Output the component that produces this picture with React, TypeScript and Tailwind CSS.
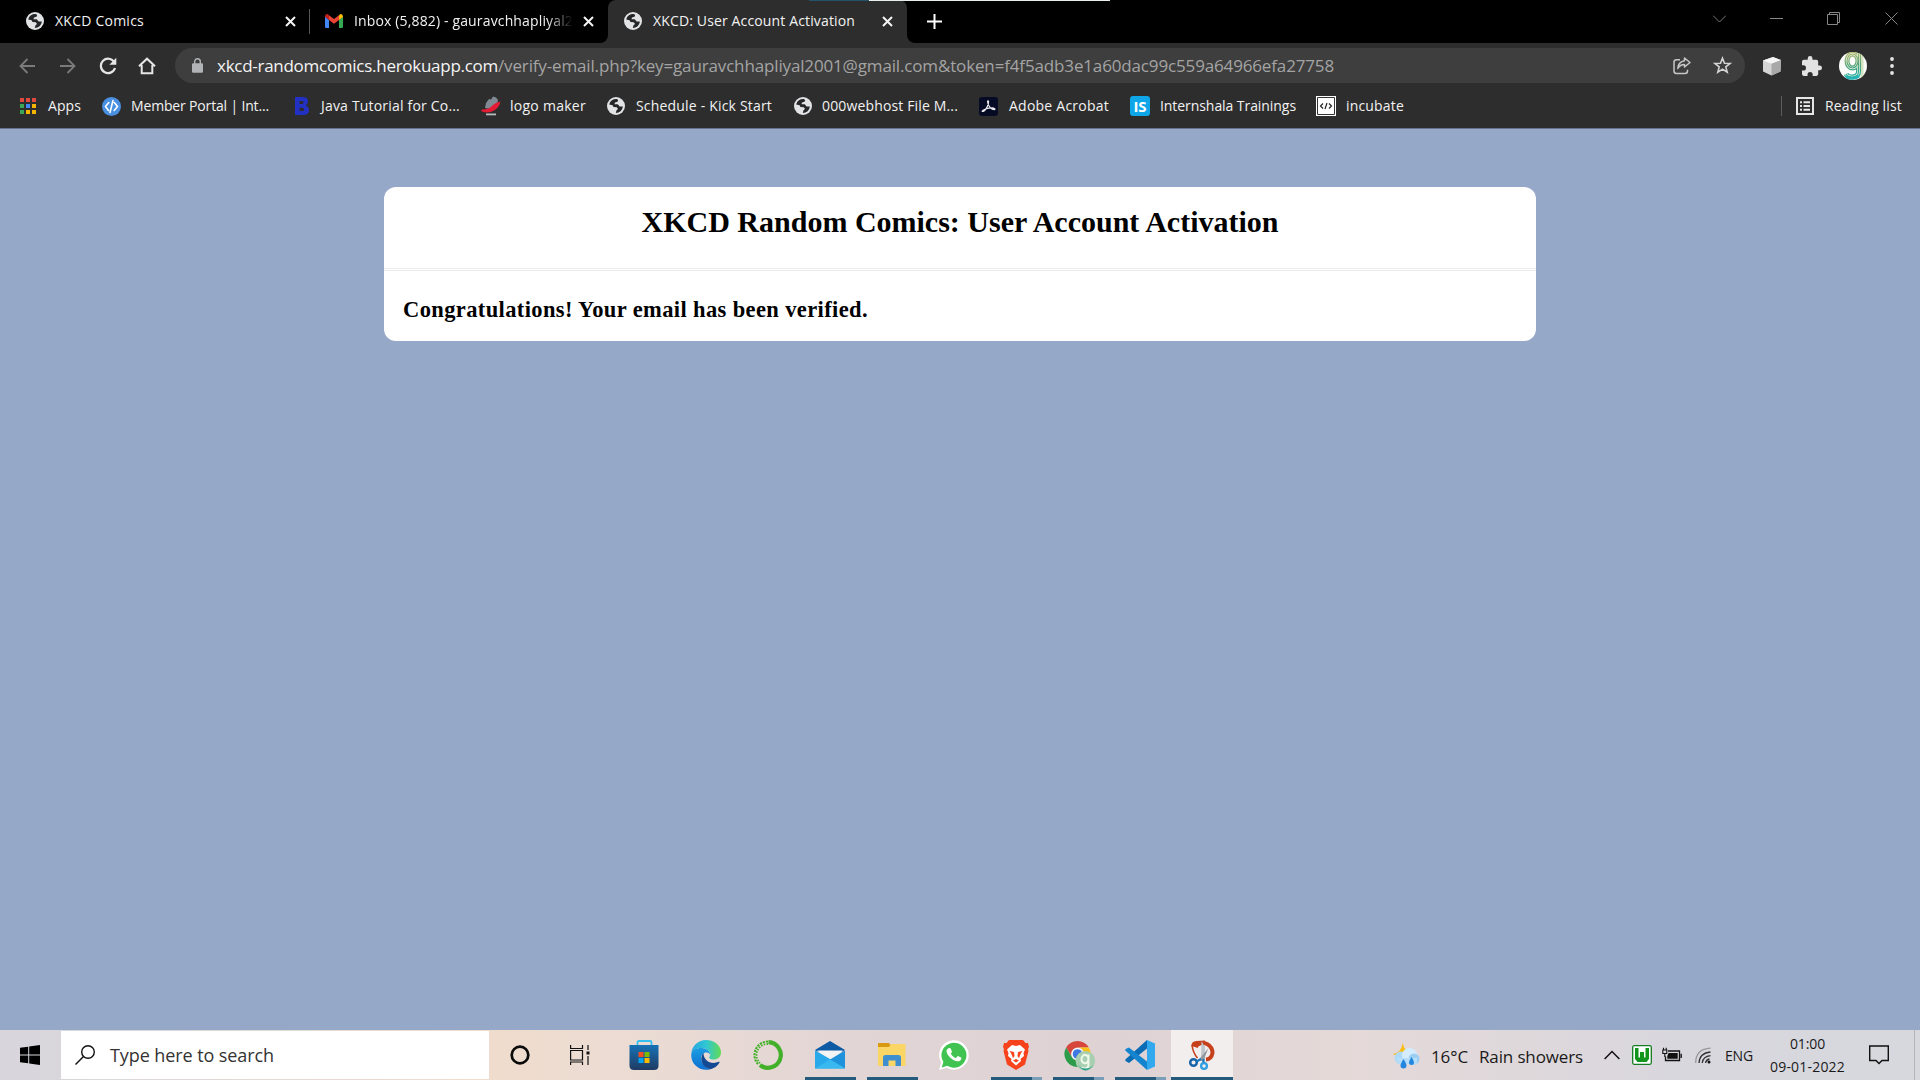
import { useLayoutEffect, useRef, useState, type ReactNode } from "react";

/** Single-line label whose tracking is adjusted so the text spans `width` pixels. */
function Label({ width, className = "", children }: { width: number; className?: string; children: string }) {
  const ref = useRef<HTMLSpanElement>(null);
  const [spacing, setSpacing] = useState(0);
  useLayoutEffect(() => {
    if (ref.current) {
      const natural = ref.current.getBoundingClientRect().width;
      setSpacing((width - natural) / children.length);
    }
  }, [width, children]);
  return (
    <span ref={ref} className={`inline-block shrink-0 whitespace-pre ${className}`} style={{ letterSpacing: `${spacing}px` }}>
      {children}
    </span>
  );
}

function Globe() {
  return (
    <svg className="size-[18px] shrink-0" viewBox="0 0 18 18">
      <circle cx="9" cy="9" r="9" fill="#e2e3e5" />
      <path
        d="M9.800 2 11.200 3 10.500 4.800 8 5.500 7.500 7.300H10.800L12.600 9.600H15.900A7 7 0 0 1 8.800 15.900L9.500 13.300 11 12 9.800 10.300 6.500 10 5.600 8.200 2.200 7.600A7 7 0 0 1 9.800 2Z"
        fill="#252628"
      />
    </svg>
  );
}

function CloseX({ className = "" }: { className?: string }) {
  return (
    <svg className={`size-[11px] shrink-0 ${className}`} viewBox="0 0 11 11">
      <path d="M1 1 10 10M10 1 1 10" stroke="#f4f4f4" strokeWidth="2" />
    </svg>
  );
}

function Gmail() {
  return (
    <svg className="h-[14px] w-[18px] shrink-0" viewBox="0 0 18 14">
      <path d="M0 2.500V12.800Q0 14 1.200 14H4V6Z" fill="#4285f4" />
      <path d="M14 6V14h2.800q1.200 0 1.200-1.200V2.500Z" fill="#34a853" />
      <path d="M4 1.200 9 5l5-3.800V6L9 9.800 4 6Z" fill="#ea4335" />
      <path d="M0 2.500Q0 0 2.200 0 3 0 4 1.200V6L0 3Z" fill="#c5221f" />
      <path d="M14 1.200Q15 0 15.800 0 18 0 18 2.500V3l-4 3Z" fill="#fbbc04" />
    </svg>
  );
}

function TabStrip() {
  return (
    <div className="flex h-[43px] items-start bg-black text-[14px] leading-[42px] text-[#f2f2f2]">
      <div className="flex h-[42px] w-[309px] shrink-0 items-center pl-[26px]">
        <Globe />
        <Label width={89} className="ml-[11px]">XKCD Comics</Label>
        <CloseX className="ml-[140.500px]" />
      </div>
      <div className="mt-[9px] h-[25px] w-px shrink-0 bg-[#555]" />
      <div className="flex h-[42px] w-[290px] shrink-0 items-center pl-[15px]">
        <Gmail />
        <div className="ml-[11px] w-[219px] overflow-hidden mask-r-from-88% mask-r-to-100%">
          <Label width={219}>Inbox (5,882) - gauravchhapliyal2</Label>
        </div>
        <CloseX className="ml-[10px]" />
      </div>
      <div className="h-[43px] w-2 shrink-0 bg-[#2d2d2d]">
        <div className="h-[43px] w-2 rounded-br-lg bg-black" />
      </div>
      <div className="h-[43px] w-[299px] shrink-0 rounded-t-lg bg-[#2d2d2d]">
        <div className="flex h-[42px] items-center pl-4">
          <Globe />
          <Label width={202} className="ml-[11px]">XKCD: User Account Activation</Label>
          <CloseX className="ml-[27px]" />
        </div>
      </div>
      <div className="h-[43px] w-2 shrink-0 bg-[#2d2d2d]">
        <div className="h-[43px] w-2 rounded-bl-lg bg-black" />
      </div>
      <svg className="mt-[14px] ml-[12px] size-[15px] shrink-0" viewBox="0 0 15 15">
        <path d="M7.500 0V15M0 7.500H15" stroke="#fff" strokeWidth="2" />
      </svg>
      <div className="ml-auto flex h-[37px] items-center gap-[44px] pr-[22px]">
        <svg className="size-[13px]" viewBox="0 0 13 13" fill="none" stroke="#777"><path d="M0 3.500l6.500 6.500L13 3.500" /></svg>
        <svg className="size-[13px]" viewBox="0 0 13 13" fill="none" stroke="#888"><path d="M0 6.500H13" /></svg>
        <svg className="size-[13px]" viewBox="0 0 13 13" fill="none" stroke="#888"><path d="M.5 2.500h10v10H.500ZM2.500 2.500V.500h10v10h-2" /></svg>
        <svg className="ml-px size-[13px]" viewBox="0 0 13 13" fill="none" stroke="#888"><path d="M.5 .5l12 12M12.500 .5l-12 12" /></svg>
      </div>
    </div>
  );
}

function Toolbar() {
  return (
    <div className="flex h-[45px] items-center bg-[#2d2d2d] pl-[19px]">
      <svg className="size-4 shrink-0" viewBox="0 0 16 16" fill="none" stroke="#7b7b7b" strokeWidth="1.800"><path d="M16 8H1.500M8.500 1 1.500 8l7 7" /></svg>
      <svg className="ml-[25px] size-4 shrink-0" viewBox="0 0 16 16" fill="none" stroke="#7b7b7b" strokeWidth="1.800"><path d="M0 8h14.500M7.500 1l7 7-7 7" /></svg>
      <svg className="ml-[23px] size-[18px] shrink-0" viewBox="0 0 18 18"><path d="M15.300 5.200A7.200 7.200 0 1 0 16 11" fill="none" stroke="#e6e6e6" strokeWidth="2.200" /><path d="M17.300.8V7.700h-7Z" fill="#e6e6e6" /></svg>
      <svg className="ml-[21px] size-[18px] shrink-0" viewBox="0 0 18 18" fill="none" stroke="#e6e6e6" strokeWidth="2"><path d="M3.700 8V16.200H14.300V8M1 9.300 9 1.700l8 7.600" /></svg>
      <div className="ml-[19px] flex h-[35px] w-[1570px] shrink-0 items-center rounded-full bg-[#3e3e3e] pl-[17px]">
        <svg className="h-[15px] w-[11px] shrink-0" viewBox="0 0 11 15"><rect y="5.300" width="11" height="9.500" rx="1.200" fill="#b1b3b7" /><path d="M2.700 6V3.500a2.800 2.800 0 0 1 5.600 0V6" fill="none" stroke="#b1b3b7" strokeWidth="1.400" /></svg>
        <div className="ml-[14px] flex text-[17px] leading-[35px]">
          <Label width={281} className="text-[#f4f4f4]">xkcd-randomcomics.herokuapp.com</Label>
          <Label width={836} className="text-[#a4a4a4]">/verify-email.php?key=gauravchhapliyal2001@gmail.com&amp;token=f4f5adb3e1a60dac99c559a64966efa27758</Label>
        </div>
        <svg className="ml-[339px] size-[18px] shrink-0" viewBox="0 0 18 18" fill="none" stroke="#c7c7c7" strokeWidth="1.500" strokeLinejoin="round">
          <path d="M7 2.700H3.500Q1 2.700 1 5V14q0 2.500 2.500 2.500H12q2.500 0 2.500-2.500V12.800" />
          <path d="M11.500 1 17 5.500 11.500 10V7.500Q7 7.500 4.800 11.500 5.200 4.800 11.500 3.800Z" />
        </svg>
        <svg className="ml-[22px] size-[19px] shrink-0" viewBox="0 0 19 19" fill="none" stroke="#d4d4d4" strokeWidth="1.600">
          <path d="M9.500 2.200 11.500 7.200 17 7.500 12.800 10.900 14.200 16.200 9.500 13.200 4.800 16.200 6.200 10.900 2 7.500 7.500 7.200Z" />
        </svg>
      </div>
      <svg className="ml-[17px] size-5 shrink-0" viewBox="0 0 20 20">
        <path d="M1 4.500 11 1l8 3-.5 11.500L9.500 19.500 1 15.500Z" fill="#d4d4d4" />
        <path d="M1 4.500 11 1l8 3-9.500 3.700Z" fill="#f5f5f5" />
        <path d="M9.500 7.700 19 4l-.5 11.500-9 4Z" fill="#a8a8a8" />
      </svg>
      <svg className="ml-[20px] size-5 shrink-0" viewBox="2 1 21 21"><path fill="#e2e2e2" d="M20.500 11H19V7c0-1.100-.9-2-2-2h-4V3.500a2.500 2.500 0 0 0-5 0V5H4c-1.100 0-2 .9-2 2v3.800h1.500a2.700 2.700 0 0 1 0 5.400H2V20c0 1.100.9 2 2 2h3.800v-1.500a2.700 2.700 0 0 1 5.400 0V22H17c1.100 0 2-.9 2-2v-4h1.500a2.500 2.500 0 0 0 0-5Z" /></svg>
      <Avatar className="ml-[17px] size-7" />
      <svg className="ml-[23px] h-[18px] w-1 shrink-0" viewBox="0 0 4 18" fill="#e6e6e6"><circle cx="2" cy="2" r="1.900" /><circle cx="2" cy="9" r="1.900" /><circle cx="2" cy="16" r="1.900" /></svg>
    </div>
  );
}

function Avatar({ className }: { className: string }) {
  return (
    <svg className={`shrink-0 ${className}`} viewBox="0 0 28 28">
      <defs>
        <linearGradient id="avatar-g" gradientUnits="userSpaceOnUse" x1="10" y1="0" x2="14" y2="28">
          <stop offset="0" stopColor="#b5b467" /><stop offset=".5" stopColor="#4fa27c" /><stop offset="1" stopColor="#19b3b6" />
        </linearGradient>
        <clipPath id="avatar-clip"><circle cx="14" cy="14" r="14" /></clipPath>
      </defs>
      <circle cx="14" cy="14" r="14" fill="#fbfcf9" />
      <g clipPath="url(#avatar-clip)" fill="none">
        <path d="M23 0V28" stroke="#d3e3bf" strokeWidth="3" />
        <g stroke="url(#avatar-g)" strokeWidth="5">
          <ellipse cx="13.500" cy="9" rx="5.500" ry="7" />
          <path d="M19.500 1V19.500q0 5.500-6.500 5.500-4.500 0-6-3" />
        </g>
        <g stroke="#eaf3dc" strokeWidth="2.600">
          <ellipse cx="13.500" cy="9" rx="5.500" ry="7" />
          <path d="M19.500 1V19.500q0 5.500-6.500 5.500-4.500 0-6-3" />
        </g>
        <g stroke="url(#avatar-g)" strokeWidth="1.200">
          <ellipse cx="13.500" cy="9" rx="5.500" ry="7" />
          <path d="M19.500 1V19.500q0 5.500-6.500 5.500-4.500 0-6-3" />
        </g>
        <path d="M7 25Q14 28 20 24" stroke="#25b5b4" strokeWidth="3" />
      </g>
    </svg>
  );
}

const appDots = ["#e0493e", "#e0493e", "#e0493e", "#3aa757", "#4285f4", "#f4b400", "#3aa757", "#f4b400", "#f4b400"];

function Bookmark({ width, textWidth, gap, icon, children }: { width: string; textWidth: number; gap: string; icon: ReactNode; children: string }) {
  return (
    <div className={`flex shrink-0 items-center ${width} ${gap}`}>
      {icon}
      <Label width={textWidth}>{children}</Label>
    </div>
  );
}

function BookmarksBar() {
  return (
    <div className="flex h-[41px] items-start border-b border-[#68748f] bg-[#2d2d2d] pl-5 text-[14px] leading-[36px] text-[#f2f2f2]">
      <Bookmark width="w-[82px]" gap="gap-3" textWidth={33} icon={
        <div className="grid size-4 grid-cols-3 gap-[2px]">
          {appDots.map((c, i) => <div key={i} style={{ backgroundColor: c }} />)}
        </div>
      }>Apps</Bookmark>
      <Bookmark width="w-[192px]" gap="gap-[10px]" textWidth={138} icon={
        <svg className="size-[19px]" viewBox="0 0 19 19"><circle cx="9.500" cy="9.500" r="9.500" fill="#4a90e2" /><path d="M6.800 5.500 3.500 9.500l3 4M12.300 5.500 15.500 9.500l-3.300 4M11 3.500 8 15.500" fill="none" stroke="#fff" strokeWidth="1.600" strokeLinecap="round" /></svg>
      }>Member Portal | Int...</Bookmark>
      <Bookmark width="w-[187px]" gap="gap-[12px]" textWidth={139} icon={
        <svg className="h-[18px] w-[15px]" viewBox="0 0 15 18"><path fillRule="evenodd" d="M1 0H9Q14 0 14 4.500 14 7.500 11.500 8.500 15 9.800 15 13q0 5-5.500 5H1ZM5.500 4V7H8q1.500 0 1.500-1.500T8 4ZM5.500 10.800V14H8.500q1.700 0 1.700-1.600T8.500 10.800Z" fill="#2230c4" /></svg>
      }>Java Tutorial for Co...</Bookmark>
      <Bookmark width="w-[126px]" gap="gap-[9px]" textWidth={76} icon={
        <svg className="size-5" viewBox="0 0 20 20"><path d="M5 7 8 3l2 .5L12 .5l3 1L17 4l-1 4-7 5-5-1Z" fill="#7f8a94" /><path d="M1 13.500Q8 13.500 12 9 15 6 19.500 5.500 18 13 10.500 15.700 4 17.500 0 15Z" fill="#e31b35" /><path d="M5 17.500h10v1.800H5Z" fill="#b8bcc0" /></svg>
      }>logo maker</Bookmark>
      <Bookmark width="w-[187px]" gap="gap-[11px]" textWidth={136} icon={<Globe />}>Schedule - Kick Start</Bookmark>
      <Bookmark width="w-[185px]" gap="gap-[10px]" textWidth={136} icon={<Globe />}>000webhost File M...</Bookmark>
      <Bookmark width="w-[151px]" gap="gap-[11px]" textWidth={100} icon={
        <svg className="size-[19px]" viewBox="0 0 19 19"><rect width="19" height="19" rx="3" fill="#050b24" /><path d="M3.500 14.500C6 14.500 10 8 9.600 4.500 9.400 3.200 8.300 3.700 8.600 5.200 9.200 9 12.500 12.700 15.200 12.700 17 12.600 15.500 10.700 12.500 10.900 9 11 3.500 12.600 3.200 14 3.100 14.400 3.200 14.500 3.500 14.500Z" fill="none" stroke="#e8e8ee" strokeWidth="1.200" /></svg>
      }>Adobe Acrobat</Bookmark>
      <Bookmark width="w-[186px]" gap="gap-[10px]" textWidth={136} icon={
        <div className="flex size-5 items-center justify-center rounded-[3px] bg-[#0ea5e9] text-[15px] font-bold text-white">IS</div>
      }>Internshala Trainings</Bookmark>
      <Bookmark width="w-[120px]" gap="gap-[10px]" textWidth={58} icon={
        <svg className="size-5" viewBox="0 0 20 20"><path d="M0 0h20v20H0Z" fill="#fff" /><path d="M1.500 1.500h17v17h-17Z" fill="none" stroke="#333" /><path d="M7 7.500 4.500 10 7 12.500M13 7.500l2.500 2.500L13 12.500M11 7l-2 6" fill="none" stroke="#222" strokeWidth="1.200" /></svg>
      }>incubate</Bookmark>
      <div className="mt-[8px] ml-auto h-5 w-px bg-[#5c5c5c]" />
      <div className="ml-[14px] flex w-[124px] items-center gap-[11px]">
        <svg className="size-[18px]" viewBox="0 0 18 18"><path d="M1 1h16v16H1Z" fill="none" stroke="#e6e6e6" strokeWidth="2" /><path d="M4 4.300h2v2H4ZM7.500 4.300H14v2H7.500ZM4 8h2v2H4ZM7.500 8H14v2H7.500ZM4 11.700h2v2H4ZM7.500 11.700H14v2H7.500Z" fill="#e6e6e6" /></svg>
        <Label width={77}>Reading list</Label>
      </div>
    </div>
  );
}

function Page() {
  return (
    <main className="flex flex-1 flex-col items-center bg-[#95a8c8] pt-[58px]">
      <section className="h-[154px] w-[1152px] rounded-xl bg-white font-['Liberation_Serif'] text-black">
        <h1 className="h-[81px] pt-4 text-center text-[30px] leading-[38px] font-bold">
          <Label width={637}>XKCD Random Comics: User Account Activation</Label>
        </h1>
        <hr className="h-[3px] border-y border-[#ebebeb]" />
        <h3 className="pt-[25px] pl-[19px] text-[22.500px] leading-7 font-bold">
          <Label width={465}>Congratulations! Your email has been verified.</Label>
        </h3>
      </section>
    </main>
  );
}

function TaskItem({ line, active, children }: { line?: "single" | "multi"; active?: boolean; children: ReactNode }) {
  return (
    <div className={`flex h-[50px] w-[62px] shrink-0 flex-col items-center ${active ? "bg-[#f2eeee]" : ""}`}>
      <div className="flex h-[47px] items-center pt-[3px]">{children}</div>
      {line && (
        <div className={`flex h-[3px] ${active ? "w-full" : "w-[51px]"}`}>
          <div className="flex-1 bg-[#245a7c]" />
          {line === "multi" && <div className="w-[10px] bg-[#7a9db8]" />}
        </div>
      )}
    </div>
  );
}

const icon30 = "size-[30px]";

function Taskbar() {
  return (
    <footer className="flex h-[50px] bg-[linear-gradient(90deg,#d8d6dc_2%,#efdccd_26%,#ecdcd3_32%,#e0d4d5_46%,#dfd2d4_58%,#e5d9d8_70%,#d8d7de_88%,#d7d7de)]">
      <div className="flex w-[61px] shrink-0 items-center pl-5">
        <svg className="size-5" viewBox="0 0 20 20"><path d="M0 2.800 8.200 1.700V9.500H0ZM9.200 1.500 20 0V9.500H9.200ZM0 10.500H8.200V18.300L0 17.200ZM9.200 10.500H20V20L9.200 18.500Z" /></svg>
      </div>
      <div className="mt-px flex h-[48px] w-[428px] shrink-0 items-center bg-white pl-[14px]">
        <svg className="size-5 shrink-0" viewBox="0 0 20 20" fill="none" stroke="#111" strokeWidth="1.400"><circle cx="13" cy="7" r="6.300" /><path d="M8.500 11.500.5 19.500" /></svg>
        <Label width={164} className="ml-[15px] text-[18px] text-[#333]">Type here to search</Label>
      </div>
      <div className="flex w-[62px] shrink-0 items-center justify-center">
        <svg className="size-5" viewBox="0 0 20 20"><circle cx="10" cy="10" r="8.300" fill="none" stroke="#0a0a0a" strokeWidth="2.700" /></svg>
      </div>
      <div className="flex w-[62px] shrink-0 items-center pl-[19px]">
        <svg className="size-5" viewBox="0 0 20 20" fill="none" stroke="#111" strokeWidth="1.200"><path d="M.6 0V3.500H12.500V0M.6 5.500H12.500V15H.600ZM.6 20V17H12.500V20M18 0V5M18 11V20" /><path d="M16.500 6.500h3v3h-3Z" fill="#111" stroke="none" /></svg>
      </div>
      <TaskItem>
        <svg className={icon30} viewBox="0 0 30 30">
          <defs><linearGradient id="store" x2="0" y2="1"><stop stopColor="#1672b5" /><stop offset="1" stopColor="#203a63" /></linearGradient></defs>
          <path d="M8.500 6V2.500Q8.500 1 10 1H21q1.500 0 1.500 1.500V6" fill="none" stroke="#35bff0" strokeWidth="1.800" />
          <path d="M.5 5h29V25.500Q29.500 30 25 30H5Q.5 30 .5 25.500Z" fill="url(#store)" />
          <path d="M9.500 12h5v5h-5Z" fill="#f25022" /><path d="M15.500 12h5v5h-5Z" fill="#7fba00" /><path d="M9.500 18h5v5h-5Z" fill="#00a4ef" /><path d="M15.500 18h5v5h-5Z" fill="#ffb900" />
        </svg>
      </TaskItem>
      <TaskItem>
        <svg className={icon30} viewBox="0 0 30 30">
          <defs>
            <linearGradient id="edge-top"><stop stopColor="#2aa5de" /><stop offset=".5" stopColor="#2fc6d4" /><stop offset="1" stopColor="#63dc55" /></linearGradient>
            <linearGradient id="edge-side" x2="0" y2="1"><stop stopColor="#1b9de2" /><stop offset="1" stopColor="#0d6fd1" /></linearGradient>
          </defs>
          <path d="M.3 13.500C1 5.500 7.500 0 15 0 24 0 30 6 30 12.500c0 4.500-3.500 7-7.300 7-3.700 0-5.200-1.500-4.200-2.700C21 13.500 17.500 8 11 8 6 8 2 10 .3 13.500Z" fill="url(#edge-top)" />
          <path d="M.2 15C.2 10.500 5 8 10.500 8c5 0 8.500 3 8.700 6.500-4-4.500-10-.5-9 5 .7 5 5 9 9.300 9.700C9.500 32 .2 25 .2 15Z" fill="url(#edge-side)" />
          <path d="M12.500 13C8 17.500 10.500 28 19.500 29.200c3.500-.7 7-3.200 9-6.700.3-.6-.2-1-.8-.7C20.500 25 12.500 21 12.500 13Z" fill="#134a93" />
        </svg>
      </TaskItem>
      <TaskItem>
        <svg className={icon30} viewBox="0 0 30 30" fill="none">
          <path d="M15.500 2.200A12.800 12.800 0 1 1 7 25" stroke="#43b02a" strokeWidth="4.200" />
          <path d="M15 1.500A13.500 13.500 0 0 0 5.500 24.600" stroke="#43b02a" strokeWidth="2" strokeDasharray="2.200 1" />
          <path d="M15 4A11 11 0 0 0 7 23" stroke="#43b02a" strokeWidth="1.800" strokeDasharray="1.500 1.300" />
        </svg>
      </TaskItem>
      <TaskItem line="single">
        <svg className={icon30} viewBox="0 0 30 30">
          <path d="M0 10 15 1l15 9-2 1.500H2Z" fill="#0c59a4" /><path d="M2 10.500H28L16 21Z" fill="#f4f4f4" />
          <path d="M0 10.500 16 19.500 30 28.500H0Z" fill="#29a9ea" /><path d="M30 10.500 15 19.500 30 28.500Z" fill="#1e93dc" /><path d="M0 28.500 15 19.500 30 28.500Z" fill="#39b9f0" />
        </svg>
      </TaskItem>
      <TaskItem line="single">
        <svg className={icon30} viewBox="0 0 30 30">
          <path d="M1 3H12l2 2.500V9H1Z" fill="#d99a12" /><path d="M1 7H12L14 4H27.500q1 0 1 1V26H1Z" fill="#fbd667" />
          <path d="M6 26V17.500Q6 15 8.500 15H21.500q2.500 0 2.500 2.500V26H18.500V20.500H11.500V26Z" fill="#3f8fd0" />
        </svg>
      </TaskItem>
      <TaskItem>
        <svg className={icon30} viewBox="0 0 30 30">
          <path d="M0 30 2.100 22.400A14.800 14.800 0 1 1 7.700 27.900Z" fill="#fff" /><path d="M2.700 27.400 4.400 21.900A12.500 12.500 0 1 1 8.300 25.800Z" fill="#40c351" />
          <path d="M10.800 8.100c.5 0 .8.1 1 .7l1.100 2.600c.2.500-.1 1-1.200 2.200 1.200 2.200 2.900 3.700 5.100 4.600l1.500-1.800c.3-.4.6-.4 1-.2l2.800 1.300c.4.200.4.700.2 1.400-.5 1.800-2.400 2.600-4 2.400-4.400-.6-9.800-5.200-10.800-9.800C7.300 10.200 8.500 8.100 10.800 8.100Z" fill="#fff" />
        </svg>
      </TaskItem>
      <TaskItem line="multi">
        <svg className={icon30} viewBox="0 0 30 30">
          <path d="M8 0H22l2.500 3H27l1 4-1 2 .5 2L24 24.500 15 30 6 24.500 2.500 11 3 9 2 7 3 3H5.500Z" fill="#f8421c" />
          <path d="M15 6 19 5 24 9.500 22.500 13 23 16 19.500 19 20 21 15 25.500 10 21 10.500 19 7 16 7.500 13 6 9.500 11 5Z" fill="#fff" />
          <path d="M8.500 11 13 12 13.500 16 12 18.200 10.500 14ZM21.500 11 17 12 16.500 16 18 18.200 19.500 14ZM12 20.500 15 19l3 1.500-3 2Z" fill="#f8421c" />
        </svg>
      </TaskItem>
      <TaskItem line="multi">
        <svg className="ml-px h-[31px] w-8" viewBox="-1 0 32 31">
          <path d="M2.200 7.500A13 13 0 0 1 24.800 7.500H13.500A6.500 6.500 0 0 0 7.900 17.200Z" fill="#d6463b" /><path d="M24.800 7.500A13 13 0 0 1 13.500 27L19.100 17.300A6.500 6.500 0 0 0 13.500 7.500Z" fill="#fbc116" /><path d="M2.200 7.500A13 13 0 0 0 13.500 27L19.100 17.300A6.500 6.500 0 0 1 7.900 17.200Z" fill="#2c9c4b" />
          <circle cx="13.500" cy="14" r="6" fill="#fff" /><circle cx="13.500" cy="14" r="4.800" fill="#3e78e0" />
          <g transform="translate(11.500 11) scale(.7)"><circle cx="14" cy="14" r="14" fill="#a8cfb0" /><path d="M18.500 5V20q0 5-5.500 5-3 0-4.500-2M18.500 11a5 6 0 1 0 0 1" fill="none" stroke="#eef8e8" strokeWidth="3" /><path d="M3 19q4 7 11 9 7-1 12-8-5 5-11 5-8 0-12-6Z" fill="#2e9e8b" /></g>
        </svg>
      </TaskItem>
      <TaskItem line="multi">
        <svg className={icon30} viewBox="0 0 30 30">
          <path d="M22 0 30 3.500V26.500L22 30Z" fill="#32a8ef" /><path d="M22 0V8.500L4 23 .5 21 .3 19.500Z" fill="#0b6cb5" /><path d="M22 30V21.500L4 7.500.5 9 .3 10.500Z" fill="#1584cf" />
        </svg>
      </TaskItem>
      <TaskItem line="single" active>
        <svg className={icon30} viewBox="0 0 30 30" fill="none">
          <path d="M9.500 5.500Q14 1.500 20 4 25.500 7 25.500 13 24.500 19 19 19.500" stroke="#c6401b" strokeWidth="4" /><path d="M11 8 4.500 6Q4 1.500 9.500 1L18 0.500V3L11 5Z" fill="#c6401b" /><path d="M5 5Q6 13 10.500 18" stroke="#c6401b" strokeWidth="1.600" />
          <path d="M14.500 1 18 7V20H14Z" fill="#bfc6cb" /><path d="M21.500 8 16 21.500 11.500 20Z" fill="#8f989f" />
          <circle cx="6.500" cy="22.500" r="3.300" stroke="#1663a8" strokeWidth="2.500" /><circle cx="17" cy="26" r="2.900" stroke="#2f9fe3" strokeWidth="2.300" /><path d="M9.500 21.500 14 19M16.500 22.500V19" stroke="#1b77bd" strokeWidth="2.200" />
        </svg>
      </TaskItem>
      <div className="ml-auto flex items-center text-[14px] text-[#1a1a1a]">
        <svg className="h-7 w-[28px]" viewBox="0 0 28 28">
          <path d="M11 1.500Q11 8 16 9L12 16 4 14.500 1 13Q9 12 11 1.500Z" fill="#f9bd17" />
          <circle cx="9" cy="17" r="6.500" fill="#aedaf8" /><circle cx="17.500" cy="14.500" r="7.500" fill="#d3edff" /><circle cx="22" cy="18" r="5.500" fill="#9ccdf3" /><path d="M5 17h20v6H7Z" fill="#b7def8" />
          <path d="M11.500 18q-3 4.500-3 6.500a3 3 0 0 0 6 0q0-2-3-6.500ZM19.500 16q-2.500 3.500-2.500 5.500a2.500 2.500 0 0 0 5 0q0-2-2.500-5.500Z" fill="#2387df" />
        </svg>
        <Label width={37} className="ml-[11px] pt-[3px] text-[17px]">16°C</Label>
        <Label width={104} className="ml-[11px] pt-[3px] text-[17px]">Rain showers</Label>
        <svg className="ml-[21px] size-4" viewBox="0 0 16 16"><path d="M.6 12 8 4.500 15.400 12" fill="none" stroke="#111" strokeWidth="1.500" /></svg>
        <svg className="ml-3 size-5" viewBox="0 0 20 20"><rect x=".7" y=".7" width="18.600" height="18.600" rx="1.500" fill="#fff" stroke="#157d22" strokeWidth="1.300" /><path d="M3 3h3.500V12.500H8V7h4v5.500h1.500V3H17V14l-2.500 3h-9L3 14Z" fill="#12951d" /></svg>
        <svg className="ml-[10px] h-4 w-5" viewBox="0 0 20 16"><path d="M6 4H17.500V13.500H3.500V9.500M19.200 6.800V11" fill="none" stroke="#111" strokeWidth="1.300" /><path d="M6.500 6H15.700V11.700H5.300V9Z" fill="#111" /><path d="M.8 3h4v3.500h-4ZM1.500 3V.8M4.200 3V.8M2.800 6.500V10" fill="none" stroke="#111" strokeWidth="1.100" /></svg>
        <svg className="ml-[13px] h-[17px] w-4" viewBox="0 0 16 17" fill="none" strokeWidth="1.300"><path d="M.7 16Q.7 2 15.500 1.200" stroke="#999" /><path d="M4 16Q4.500 6 15.500 5M7.200 16Q8 9.500 15.500 8.700M10.500 16Q11 12.800 14.500 12" stroke="#333" /><circle cx="14" cy="15" r="1.500" fill="#111" /></svg>
        <Label width={28} className="ml-[14px] text-[14px]">ENG</Label>
        <div className="ml-[17px] flex h-[50px] w-[75px] flex-col items-center pt-[2px] leading-[23px]">
          <Label width={35}>01:00</Label>
          <Label width={75}>09-01-2022</Label>
        </div>
        <svg className="ml-6 size-5" viewBox="0 0 20 20"><path d="M.7 1H19.300V15.500H13L10 18.500 7 15.500H.700Z" fill="none" stroke="#111" strokeWidth="1.400" /></svg>
        <div className="ml-[25px] h-[50px] w-px bg-[#b4b4bc]" />
        <div className="w-[5px]" />
      </div>
    </footer>
  );
}

export default function App() {
  return (
    <div className="relative flex h-[1080px] w-[1920px] flex-col overflow-hidden font-['Open_Sans',sans-serif]">
      <div className="absolute top-0 left-[809px] flex h-px w-[301px]">
        <div className="w-[60px] bg-[#245069]" />
        <div className="flex-1 bg-[#e8eeee]" />
      </div>
      <TabStrip />
      <Toolbar />
      <BookmarksBar />
      <Page />
      <Taskbar />
    </div>
  );
}
